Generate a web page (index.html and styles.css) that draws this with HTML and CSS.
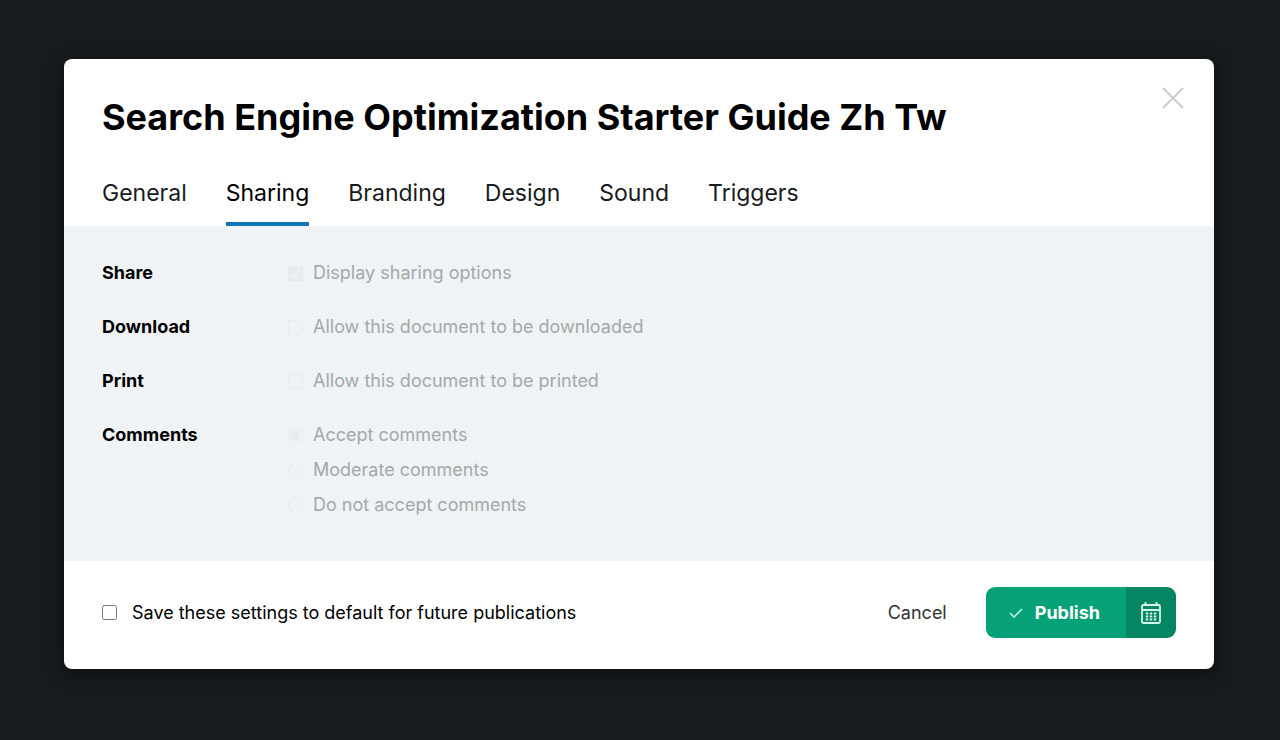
FILE: index.html
```
<!DOCTYPE html>
<html lang="en">
<head>
    <meta charset="utf-8">
    <title>Publication settings</title>
    <link rel="stylesheet" href="styles.css">
</head>
<body>
    <form class="modal">
        <header class="modal-header">
            <div class="title-row">
                <h1>Search Engine Optimization Starter Guide Zh Tw</h1>
                <button type="button" class="close" aria-label="Close">
                    <svg width="22" height="22" viewBox="0 0 22 22"><path d="M1 1l20 20M21 1L1 21" fill="none" stroke="currentColor" stroke-width="2"/></svg>
                </button>
            </div>
            <nav class="tabs">
                <a href="#general">General</a>
                <a href="#sharing" class="active">Sharing</a>
                <a href="#branding">Branding</a>
                <a href="#design">Design</a>
                <a href="#sound">Sound</a>
                <a href="#triggers">Triggers</a>
            </nav>
        </header>

        <section class="settings">
            <div class="setting">
                <h2>Share</h2>
                <div class="options">
                    <label><input type="checkbox" checked disabled> Display sharing options</label>
                </div>
            </div>
            <div class="setting">
                <h2>Download</h2>
                <div class="options">
                    <label><input type="checkbox" disabled> Allow this document to be downloaded</label>
                </div>
            </div>
            <div class="setting">
                <h2>Print</h2>
                <div class="options">
                    <label><input type="checkbox" disabled> Allow this document to be printed</label>
                </div>
            </div>
            <div class="setting">
                <h2>Comments</h2>
                <div class="options">
                    <label><input type="radio" name="comments" checked disabled> Accept comments</label>
                    <label><input type="radio" name="comments" disabled> Moderate comments</label>
                    <label><input type="radio" name="comments" disabled> Do not accept comments</label>
                </div>
            </div>
        </section>

        <footer class="modal-footer">
            <label class="save-default"><input type="checkbox"> Save these settings to default for future publications</label>
            <div class="actions">
                <button type="button" class="cancel">Cancel</button>
                <div class="publish-group">
                    <button type="submit" class="publish">
                        <svg width="14" height="12" viewBox="0 0 14 12"><path d="M1 6l4 4 8-8" fill="none" stroke="#b5f2dc" stroke-width="1.6"/></svg>
                        Publish
                    </button>
                    <button type="button" class="schedule" aria-label="Schedule">
                        <svg width="20" height="22" viewBox="0 0 20 22" fill="none" stroke="#d5f7ea" stroke-width="1.8">
                            <rect x="1" y="3" width="18" height="18" rx="1.500"/>
                            <path d="M1 8h18M4.500 0v4M15.500 0v4"/>
                            <path d="M4.800 11.500h10.400M4.800 14.500h10.400M4.800 17.500h10.400" stroke-width="1.8" stroke-dasharray="2.400 1.600"/>
                        </svg>
                    </button>
                </div>
            </div>
        </footer>
    </form>
</body>
</html>
```
FILE: styles.css
```
* {
    box-sizing: border-box;
}

body {
    margin: 0;
    min-height: 100vh;
    padding: 59px 66px 71px 64px;
    background-color: #161b1d;
    color: #000;
    font-family: Inter, Arial, sans-serif;
    font-size: 18px;
    line-height: 26px;
}

button {
    border: none;
    padding: 0;
    background: none;
    color: inherit;
    font: inherit;
    cursor: pointer;
}

svg {
    display: block;
}

.modal {
    border-radius: 8px;
    background-color: #fff;
    box-shadow: 0 4px 16px rgba(0, 0, 0, 0.5);
    overflow: hidden;
}

.modal-header {
    padding: 28px 30px 0 38px;
}

.title-row {
    display: flex;
    justify-content: space-between;
    align-items: flex-start;
}

h1 {
    margin: 6px 0 0;
    font-size: 36px;
    font-weight: 700;
    line-height: 48px;
}

.close {
    color: #ccc;
}

.tabs {
    display: flex;
    gap: 39px;
    margin-top: 35px;
}

.tabs a {
    padding-bottom: 12px;
    border-bottom: 4px solid transparent;
    color: #171b1e;
    font-size: 23px;
    line-height: 34px;
    text-decoration: none;
}

.tabs .active {
    border-bottom-color: #1275b5;
    color: #000;
}

.settings {
    display: grid;
    gap: 28px;
    padding: 34px 38px 43px;
    background-color: #eff3f5;
}

.setting {
    display: grid;
    grid-template-columns: 186px 1fr;
}

h2 {
    margin: 0;
    font-size: 18px;
    font-weight: 700;
    line-height: 26px;
}

.options {
    display: grid;
    gap: 9px;
    color: #a5a7a9;
}

label {
    display: flex;
    align-items: center;
    gap: 10px;
}

input {
    flex: none;
    width: 15px;
    height: 15px;
    margin: 0;
}

input:disabled {
    opacity: 0.2;
}

.save-default {
    gap: 15px;
}

.modal-footer {
    display: flex;
    justify-content: space-between;
    align-items: center;
    padding: 26px 38px 31px;
}

.actions {
    display: flex;
    align-items: center;
    gap: 39px;
}

.cancel {
    color: #333;
}

.publish-group {
    display: flex;
    border-radius: 9px;
    overflow: hidden;
    color: #fff;
}

.publish {
    display: flex;
    align-items: center;
    gap: 12px;
    height: 51px;
    padding: 0 26px 0 23px;
    background-color: #06a177;
    font-weight: 700;
}

.schedule {
    padding: 0 15px;
    background-color: #058562;
}
```
